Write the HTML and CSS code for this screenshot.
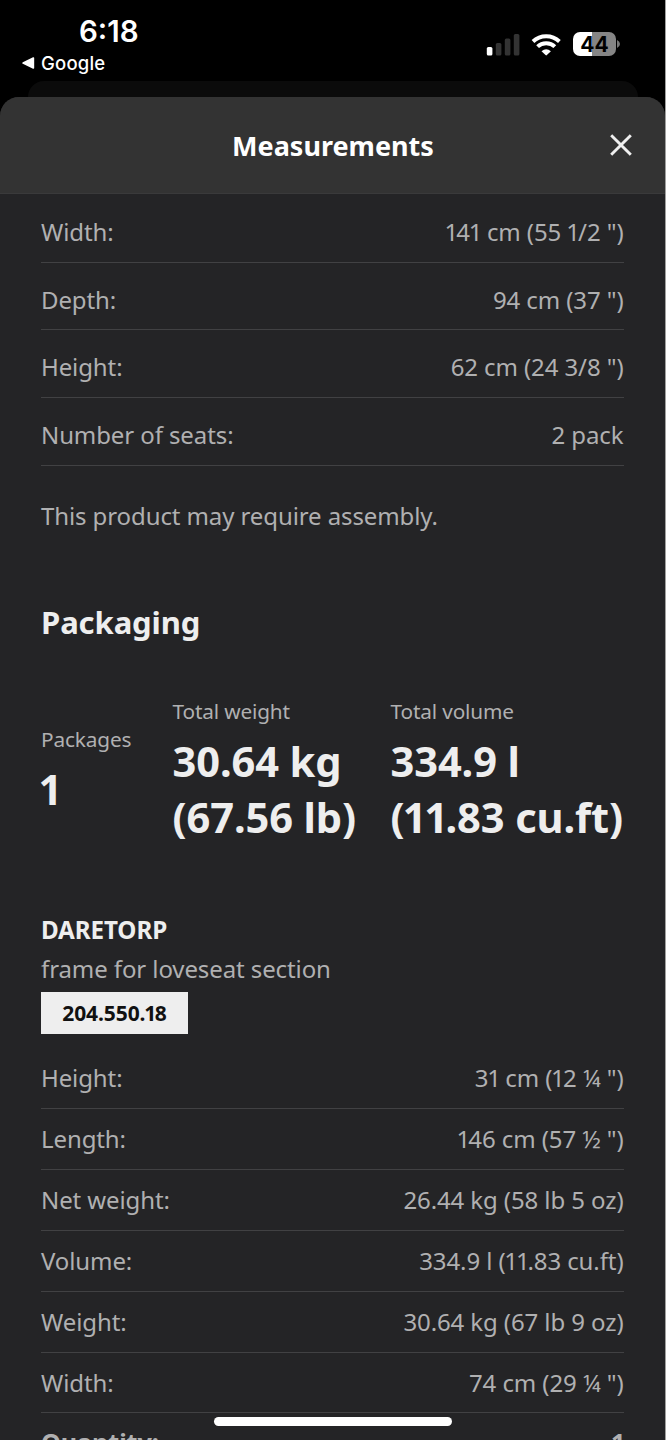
FILE: index.html
```html
<!DOCTYPE html>
<html lang="en">
<head>
<meta charset="utf-8">
<title>Measurements</title>
<link rel="stylesheet" href="styles.css">
</head>
<body>
<div class="screen">
  <header class="status">
    <div class="status-left">
      <div class="time">6:18</div>
      <div class="back"><svg width="13" height="12" viewBox="0 0 13 12"><path d="M.8 5.2 11 .3Q12.2 0 12.2 1V11Q12.2 12 11 11.7L.8 6.8Q-.4 6 .8 5.2Z" fill="#fff"/></svg><span>Google</span></div>
    </div>
    <div class="status-right">
      <svg width="34" height="22" viewBox="0 0 34 22"><rect x=".8" y="13" width="5.600" height="8.500" rx="1.500" fill="#fff"/><g fill="#333"><rect x="9.800" y="9" width="5.600" height="12.500" rx="1.500"/><rect x="18.800" y="4.500" width="5.600" height="17" rx="1.500"/><rect x="27.800" y="0" width="5.600" height="21.500" rx="1.500"/></g></svg>
      <svg class="wifi" width="30" height="22" viewBox="0 0 30 22"><g fill="none" stroke="#fff" stroke-width="3.900"><path d="M2 7.500Q7.500 2.200 15.200 2.200T28.400 7.500"/><path d="M6.600 12.700Q10 9.200 15.200 9.200T23.800 12.700"/></g><path d="M10.500 17.200Q15.200 13.400 19.900 17.200L15.900 21.100Q15.200 21.700 14.500 21.100Z" fill="#fff"/></svg>
      <div class="battery">44</div><svg class="tip" width="4" height="8" viewBox="0 0 4 8"><path d="M0 0Q3 1.300 3 4T0 8Z" fill="#777"/></svg>
    </div>
  </header>
  <div class="behind"></div>
  <main class="sheet">
    <div class="sheet-head">
      <h1>Measurements</h1>
      <svg class="close" width="22" height="22" viewBox="0 0 22 22"><path d="M1.200 1.200 20.800 20.800M20.800 1.200 1.200 20.800" stroke="#f0f0f0" stroke-width="2.900"/></svg>
    </div>
    <div class="content">
      <dl class="rows product">
        <div class="row"><dt>Width:</dt><dd><i>1</i>4<i>1</i> cm (55 <i>1</i>/2 ")</dd></div>
        <div class="row"><dt>Depth:</dt><dd>94 cm (37 ")</dd></div>
        <div class="row"><dt>Height:</dt><dd>62 cm (24 3/8 ")</dd></div>
        <div class="row"><dt>Number of seats:</dt><dd>2 pack</dd></div>
      </dl>
      <p class="note">This product may require assembly.</p>
      <h2>Packaging</h2>
      <section class="totals">
        <div class="packages"><span>Packages</span><strong><i>1</i></strong></div>
        <div class="weight"><span>Total weight</span><strong>30.64 kg<br>(67.56 lb)</strong></div>
        <div class="volume"><span>Total volume</span><strong>334.9 l<br>(<i class="pair">11</i>.83 cu.ft)</strong></div>
      </section>
      <h3>DARETORP</h3>
      <p class="desc">frame for loveseat section</p>
      <div class="article">204.550.<i>1</i>8</div>
      <dl class="rows package">
        <div class="row"><dt>Height:</dt><dd>3<i>1</i> cm (<i>1</i>2 ¼ ")</dd></div>
        <div class="row"><dt>Length:</dt><dd><i>1</i>46 cm (57 ½ ")</dd></div>
        <div class="row"><dt>Net weight:</dt><dd>26.44 kg (58 lb 5 oz)</dd></div>
        <div class="row"><dt>Volume:</dt><dd>334.9 l (<i class="pair">11</i>.83 cu.ft)</dd></div>
        <div class="row"><dt>Weight:</dt><dd>30.64 kg (67 lb 9 oz)</dd></div>
        <div class="row"><dt>Width:</dt><dd>74 cm (29 ¼ ")</dd></div>
        <div class="row quantity"><dt>Quantity:</dt><dd><i>1</i></dd></div>
      </dl>
    </div>
  </main>
  <div class="home"></div>
</div>
</body>
</html>
```
FILE: styles.css
```css
* { box-sizing: border-box; margin: 0; padding: 0; }
body { background: #a0a09f; font-family: "Noto Sans", sans-serif; }
.screen { position: relative; width: 665px; height: 1440px; overflow: hidden; background: #000; display: flex; flex-direction: column; }
.status { height: 81px; flex: none; display: flex; justify-content: space-between; padding: 0 44px 0 22px; font-family: Inter, sans-serif; color: #fff; }
.time { padding-left: 57px; margin-top: 13px; font-size: 29.500px; line-height: 36px; font-weight: 600; }
.back { display: flex; align-items: center; gap: 6px; font-size: 18.500px; line-height: 24px; font-weight: 500; margin-top: 2px; letter-spacing: .2px; }
.status-right { display: flex; align-items: flex-start; padding-top: 34px; }
.wifi { margin-left: 11px; }
.battery { width: 43px; height: 24px; margin: -2px 0 0 12px; border-radius: 7px; background: linear-gradient(90deg, #fff 45%, #858585 45%); color: #000; font-size: 21px; line-height: 25px; font-weight: 700; text-align: center; }
.tip { margin: 6px 0 0 1px; }
.behind { height: 40px; flex: none; margin: 0 27px 0 28px; border-radius: 16px 16px 0 0; background: #0b0b0b; }
.sheet { flex: 1; min-height: 0; margin-top: -24px; border-radius: 19px 19px 0 0; overflow: hidden; background: #242426; }
.sheet-head { height: 97px; background: #333; border-bottom: 1px solid #3a3a3b; display: grid; grid-template-columns: 1fr auto 1fr; align-items: center; padding: 0 32px 0 33px; }
h1 { grid-column: 2; font-size: 27px; line-height: 38px; color: #fff; padding-top: 2px; }
.close { justify-self: end; margin-right: 1px; }
.content { padding: 1px 41px 0; color: #b0b0b1; font-size: 24px; letter-spacing: -.1px; }
i { font-style: normal; margin: 0 -.07em 0 -.05em; }
.pair { letter-spacing: -.09em; margin-right: 0; }
strong .pair { letter-spacing: -.06em; margin-left: -.04em; }
.row { display: flex; justify-content: space-between; height: 60.900px; padding-top: 13px; border-bottom: 1px solid #414143; line-height: 34px; }
.product .row { height: 67.650px; padding-top: 20px; }
.row dd { margin-right: .5px; }
.note { margin-top: 33px; line-height: 34px; }
h2 { margin-top: 68px; font-size: 31px; line-height: 42px; color: #eee; }
.totals { display: flex; align-items: center; margin-top: 52px; }
.totals span { display: block; font-size: 20.800px; line-height: 33px; letter-spacing: -.15px; }
.totals strong { display: block; font-size: 41.600px; line-height: 56.500px; margin-top: 5px; color: #eee; white-space: nowrap; }
.packages strong i { margin-left: -.06em; }
.packages { width: 131.500px; }
.weight { width: 218px; }
h3 { margin-top: 65px; font-size: 24.200px; line-height: 38px; color: #eee; }
.desc { line-height: 38px; margin-top: 1px; }
.article { width: 147px; height: 42px; margin-top: 4px; background: #eee; color: #111; font-weight: 700; font-size: 21px; line-height: 42px; text-align: center; }
.package { margin-top: 14.500px; }
.quantity { border: 0; font-weight: 700; font-size: 25.200px; padding-top: 12px; }
.home { position: absolute; left: 214px; top: 1417px; width: 238px; height: 9px; border-radius: 5px; background: #fff; }
```
